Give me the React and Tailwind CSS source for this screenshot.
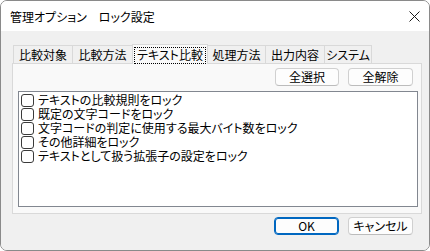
import React from "react";

const font = "font-['Noto_Sans_CJK_JP','Noto_Sans',sans-serif] [font-feature-settings:'palt']";

function Tab({ label, w, selected, first }) {
  if (selected) {
    return (
      <div
        className={`${w} -ml-px h-[20px] -mb-px relative z-10 bg-[#f9f9f9] border border-b-0 border-[#d9d9d9] flex items-center justify-center`}
      >
        <span className="px-[2px] h-[17px] mt-[1px] flex items-center border border-dotted border-black leading-none text-[12px]">
          {label}
        </span>
      </div>
    );
  }
  return (
    <div
      className={`${w} ${first ? "ml-px" : "-ml-px"} h-[18px] bg-[#f0f0f0] border border-b-0 border-[#d9d9d9] flex items-center justify-center text-[12px] leading-none`}
    >
      {label}
    </div>
  );
}

function Btn({ children, w, primary }) {
  return (
    <div
      className={`${w} h-[18px] rounded-[4px] flex items-center justify-center text-[12px] leading-none bg-[#fdfdfd] border ${
        primary ? "border-[#0067c0] shadow-[inset_0_0_0_1px_#0067c0]" : "border-[#d0d0d0] border-b-[#bcbcbc]"
      }`}
    >
      {children}
    </div>
  );
}

const items = [
  "テキストの比較規則をロック",
  "既定の文字コードをロック",
  "文字コードの判定に使用する最大バイト数をロック",
  "その他詳細をロック",
  "テキストとして扱う拡張子の設定をロック",
];

export default function App() {
  return (
    <div className={`${font} w-[430px] h-[251px] overflow-hidden rounded-[7px] border border-[#8a8a8a] flex flex-col text-black`}>
      <div className="h-[30px] bg-white flex items-center justify-between pl-[9px] pr-[9px] shrink-0">
        <span className="text-[12px] leading-none mt-[1px]">管理オプション　ロック設定</span>
        <svg width="11" height="11" viewBox="0 0 11 11" className="mt-[1px]">
          <path d="M0.5 0.5 L10.5 10.5 M10.5 0.5 L0.5 10.5" stroke="#1a1a1a" strokeWidth="1" fill="none" />
        </svg>
      </div>
      <div className="flex-1 bg-[#f0f0f0] pl-[11px] pt-[12px] flex flex-col">
        <div className="flex items-end h-[20px]">
          <Tab label="比較対象" w="w-[60px]" first />
          <Tab label="比較方法" w="w-[61px]" />
          <Tab label="テキスト比較" w="w-[76px]" selected />
          <Tab label="処理方法" w="w-[59px]" />
          <Tab label="出力内容" w="w-[60px]" />
          <Tab label="システム" w="w-[48px]" />
        </div>
        <div className="w-[410px] h-[151px] bg-[#f9f9f9] border border-[#d9d9d9] pt-[4px] flex flex-col">
          <div className="flex justify-end gap-[9px] pr-[8px]">
            <Btn w="w-[64px]">全選択</Btn>
            <Btn w="w-[65px]">全解除</Btn>
          </div>
          <div className="mt-[5px] ml-[5px] w-[400px] h-[116px] border border-[#828790] bg-white pt-[1px] pl-[2px]">
            {items.map((t) => (
              <div key={t} className="h-[14px] flex items-center gap-[4px]">
                <div className="w-[13px] h-[13px] shrink-0 border border-[#3a3a3a] rounded-[3px] bg-white" />
                <span className="text-[12px] leading-none whitespace-nowrap">{t}</span>
              </div>
            ))}
          </div>
        </div>
        <div className="w-[410px] flex justify-end gap-[9px] pr-[9px] mt-[3px]">
          <Btn w="w-[65px]" primary>OK</Btn>
          <Btn w="w-[65px]">キャンセル</Btn>
        </div>
      </div>
    </div>
  );
}
